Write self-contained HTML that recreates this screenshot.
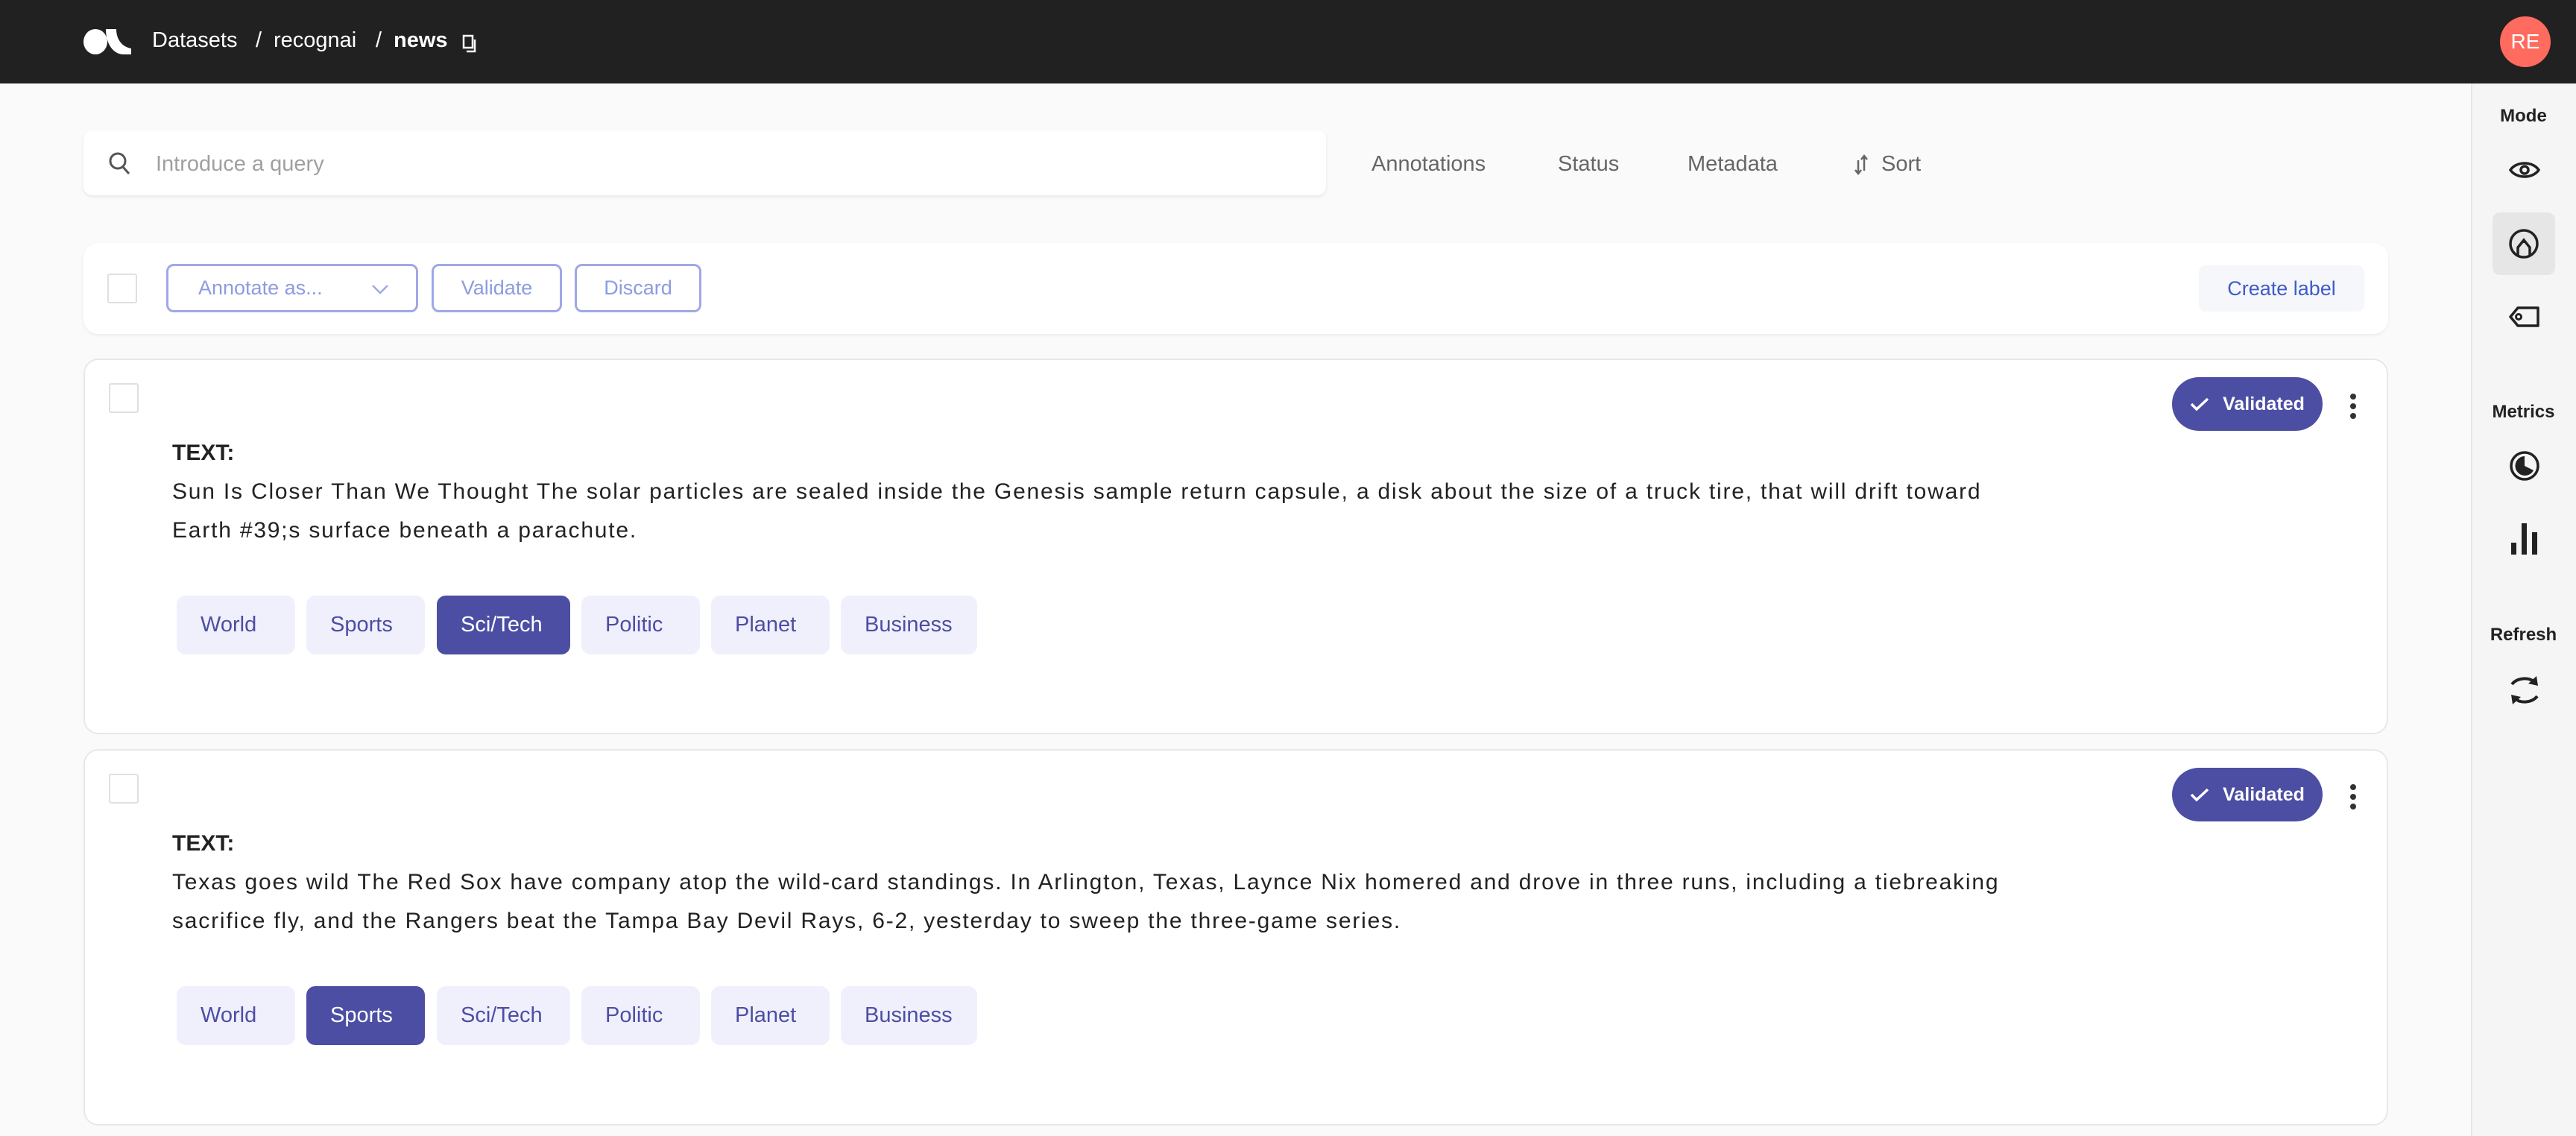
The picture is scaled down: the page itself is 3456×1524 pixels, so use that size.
<!DOCTYPE html>
<html><head><meta charset="utf-8"><style>
*{margin:0;padding:0;box-sizing:border-box}
body{width:3456px;height:1524px;background:#fafafa;font-family:"Liberation Sans",sans-serif;position:relative;overflow:hidden;color:#222}
.a{position:absolute}
.top{left:0;top:0;width:3456px;height:112px;background:#212121}
.nav{color:#fff;font-size:29px;top:38px}
.side{left:3315px;top:112px;width:141px;height:1412px;background:#f5f5f5;border-left:2px solid #e6e6e6}
.sl{font-weight:bold;font-size:24px;color:#222;width:141px;text-align:center;left:3315px}
.card{background:#fff;border:2px solid #e8e8e8;border-radius:20px}
.cb{width:40px;height:40px;border:2px solid #e0e0e0;border-radius:3px;background:#fff}
.btn{border:3px solid #9fa8e6;border-radius:10px;color:#8d9be0;font-size:27px;display:flex;align-items:center;justify-content:center;background:#fff}
.tab{color:#666;font-size:29px;top:204px}
.lab{height:79px;border-radius:12px;background:#f0f0fd;color:#4c4ea3;font-size:29px;display:flex;align-items:center;padding-left:32px}
.lab.on{background:#4c4ea3;color:#fff}
.txt{font-size:30px;line-height:52px;color:#222;white-space:nowrap;letter-spacing:1.8px}
.pill{background:#4c4ea3;color:#fff;border-radius:36px;font-size:25px;font-weight:bold;display:flex;align-items:center;justify-content:center;gap:18px}
</style></head><body>
<div class="a top"></div>
<svg class="a" style="left:112px;top:39px" width="66" height="34" viewBox="0 0 66 34"><ellipse cx="16" cy="17" rx="16" ry="17" fill="#fff"/><path d="M30 0 H44 C44 14 52 24 64 26 V34 H54 C40 34 30 20 30 0Z" fill="#fff"/></svg>
<div class="a nav" style="left:204px">Datasets</div>
<div class="a nav" style="left:343px">/</div>
<div class="a nav" style="left:367px">recognai</div>
<div class="a nav" style="left:504px">/</div>
<div class="a nav" style="left:528px;font-weight:bold">news</div>
<svg class="a" style="left:620px;top:46px" width="20" height="26" viewBox="0 0 20 26"><rect x="2" y="2" width="12" height="16" fill="none" stroke="#fff" stroke-width="2.5"/><path d="M17 7 V23 H6" fill="none" stroke="#fff" stroke-width="2.5"/></svg>
<div class="a" style="left:3354px;top:22px;width:68px;height:68px;border-radius:50%;background:#ff6b5e;color:#fff;font-size:28px;display:flex;align-items:center;justify-content:center">RE</div>

<div class="a" style="left:112px;top:175px;width:1667px;height:87px;background:#fff;border-radius:12px;box-shadow:0 2px 4px rgba(0,0,0,.08)"></div>
<svg class="a" style="left:145px;top:203px" width="32" height="32" viewBox="0 0 32 32"><circle cx="13" cy="13" r="10" fill="none" stroke="#555" stroke-width="3"/><path d="M20 21 L28 30" stroke="#555" stroke-width="3"/></svg>
<div class="a" style="left:209px;top:204px;font-size:29px;color:#a0a0a0">Introduce a query</div>
<div class="a tab" style="left:1840px">Annotations</div>
<div class="a tab" style="left:2090px">Status</div>
<div class="a tab" style="left:2264px">Metadata</div>
<svg class="a" style="left:2487px;top:207px" width="20" height="28" viewBox="0 0 20 28"><path d="M6 8 V26 M2 21 L6 26 L10 21 M14 22 V2 M10 7 L14 2 L18 7" fill="none" stroke="#666" stroke-width="2.5"/></svg>
<div class="a tab" style="left:2524px">Sort</div>

<div class="a card" style="left:112px;top:326px;width:3092px;height:122px;border:none;box-shadow:0 2px 4px rgba(0,0,0,.06)"></div>
<div class="a cb" style="left:144px;top:367px"></div>
<div class="a btn" style="left:223px;top:354px;width:338px;height:65px;justify-content:flex-start;padding-left:40px">Annotate as...<svg style="position:absolute;right:36px;top:24px" width="24" height="14" viewBox="0 0 24 14"><path d="M2 2 L12 12 L22 2" fill="none" stroke="#9fa8e6" stroke-width="2.5"/></svg></div>
<div class="a btn" style="left:579px;top:354px;width:175px;height:65px">Validate</div>
<div class="a btn" style="left:771px;top:354px;width:170px;height:65px">Discard</div>
<div class="a" style="left:2950px;top:356px;width:222px;height:62px;background:#f6f7fb;border-radius:10px;color:#3e5cc9;font-size:27px;display:flex;align-items:center;justify-content:center">Create label</div>

<!-- card 1 -->
<div class="a card" style="left:112px;top:481px;width:3092px;height:504px"></div>
<div class="a cb" style="left:146px;top:514px"></div>
<div class="a pill" style="left:2914px;top:506px;width:202px;height:72px"><svg width="26" height="20" viewBox="0 0 26 20"><path d="M2 10 L9 17 L24 3" fill="none" stroke="#fff" stroke-width="3.5"/></svg>Validated</div>
<svg class="a" style="left:3151px;top:526px" width="12" height="38" viewBox="0 0 12 38"><circle cx="6" cy="6" r="4" fill="#333"/><circle cx="6" cy="19" r="4" fill="#333"/><circle cx="6" cy="32" r="4" fill="#333"/></svg>
<div class="a txt" style="left:231px;top:582px;font-weight:bold;letter-spacing:0">TEXT:</div>
<div class="a txt" style="left:231px;top:634px">Sun Is Closer Than We Thought The solar particles are sealed inside the Genesis sample return capsule, a disk about the size of a truck tire, that will drift toward</div>
<div class="a txt" style="left:231px;top:686px">Earth #39;s surface beneath a parachute.</div>
<div class="a lab" style="left:237px;top:799px;width:159px">World</div>
<div class="a lab" style="left:411px;top:799px;width:159px">Sports</div>
<div class="a lab on" style="left:586px;top:799px;width:179px">Sci/Tech</div>
<div class="a lab" style="left:780px;top:799px;width:159px">Politic</div>
<div class="a lab" style="left:954px;top:799px;width:159px">Planet</div>
<div class="a lab" style="left:1128px;top:799px;width:183px">Business</div>

<!-- card 2 -->
<div class="a card" style="left:112px;top:1005px;width:3092px;height:505px"></div>
<div class="a cb" style="left:146px;top:1038px"></div>
<div class="a pill" style="left:2914px;top:1030px;width:202px;height:72px"><svg width="26" height="20" viewBox="0 0 26 20"><path d="M2 10 L9 17 L24 3" fill="none" stroke="#fff" stroke-width="3.5"/></svg>Validated</div>
<svg class="a" style="left:3151px;top:1050px" width="12" height="38" viewBox="0 0 12 38"><circle cx="6" cy="6" r="4" fill="#333"/><circle cx="6" cy="19" r="4" fill="#333"/><circle cx="6" cy="32" r="4" fill="#333"/></svg>
<div class="a txt" style="left:231px;top:1106px;font-weight:bold;letter-spacing:0">TEXT:</div>
<div class="a txt" style="left:231px;top:1158px">Texas goes wild The Red Sox have company atop the wild-card standings. In Arlington, Texas, Laynce Nix homered and drove in three runs, including a tiebreaking</div>
<div class="a txt" style="left:231px;top:1210px">sacrifice fly, and the Rangers beat the Tampa Bay Devil Rays, 6-2, yesterday to sweep the three-game series.</div>
<div class="a lab" style="left:237px;top:1323px;width:159px">World</div>
<div class="a lab on" style="left:411px;top:1323px;width:159px">Sports</div>
<div class="a lab" style="left:586px;top:1323px;width:179px">Sci/Tech</div>
<div class="a lab" style="left:780px;top:1323px;width:159px">Politic</div>
<div class="a lab" style="left:954px;top:1323px;width:159px">Planet</div>
<div class="a lab" style="left:1128px;top:1323px;width:183px">Business</div>

<!-- sidebar -->
<div class="a side"></div>
<div class="a sl" style="top:142px">Mode</div>
<svg class="a" style="left:3366px;top:212px" width="42" height="32" viewBox="0 0 42 32"><path d="M2 16 C10 4 32 4 40 16 C32 28 10 28 2 16Z" fill="none" stroke="#222" stroke-width="3.5"/><circle cx="21" cy="16" r="5" fill="none" stroke="#222" stroke-width="3.5"/></svg>
<div class="a" style="left:3344px;top:285px;width:84px;height:84px;background:#e6e6e6;border-radius:10px"></div>
<svg class="a" style="left:3365px;top:306px" width="42" height="42" viewBox="0 0 42 42"><circle cx="21" cy="21" r="18" fill="none" stroke="#222" stroke-width="3.5"/><path d="M13 36 V26 L21 16 L29 26 V36" fill="none" stroke="#222" stroke-width="3.5"/><path d="M18 20 L21 14 L24 20Z" fill="#222"/></svg>
<svg class="a" style="left:3366px;top:410px" width="42" height="30" viewBox="0 0 42 30"><path d="M12 3 H39 V27 H12 L2 15Z" fill="none" stroke="#222" stroke-width="3.5" stroke-linejoin="round"/><circle cx="13" cy="15" r="3.5" fill="none" stroke="#222" stroke-width="3"/></svg>
<div class="a sl" style="top:539px">Metrics</div>
<svg class="a" style="left:3366px;top:604px" width="42" height="42" viewBox="0 0 42 42"><circle cx="21" cy="21" r="18" fill="none" stroke="#222" stroke-width="3.5"/><path d="M21 8 A13 13 0 1 0 33 27 L21 21Z" fill="#222"/></svg>
<svg class="a" style="left:3368px;top:702px" width="38" height="42" viewBox="0 0 38 42"><rect x="1" y="26" width="7" height="16" fill="#222"/><rect x="15" y="0" width="7" height="42" fill="#222"/><rect x="29" y="12" width="7" height="30" fill="#222"/></svg>
<div class="a sl" style="top:838px">Refresh</div>
<svg class="a" style="left:3367px;top:904px" width="40" height="44" viewBox="0 0 40 44"><path d="M3 14 C10 5 26 4 33 11" fill="none" stroke="#222" stroke-width="4"/><path d="M36 3 L38 16 L25 13Z" fill="#222"/><path d="M37 30 C30 39 14 40 7 33" fill="none" stroke="#222" stroke-width="4"/><path d="M4 41 L2 28 L15 31Z" fill="#222"/></svg>
</body></html>
